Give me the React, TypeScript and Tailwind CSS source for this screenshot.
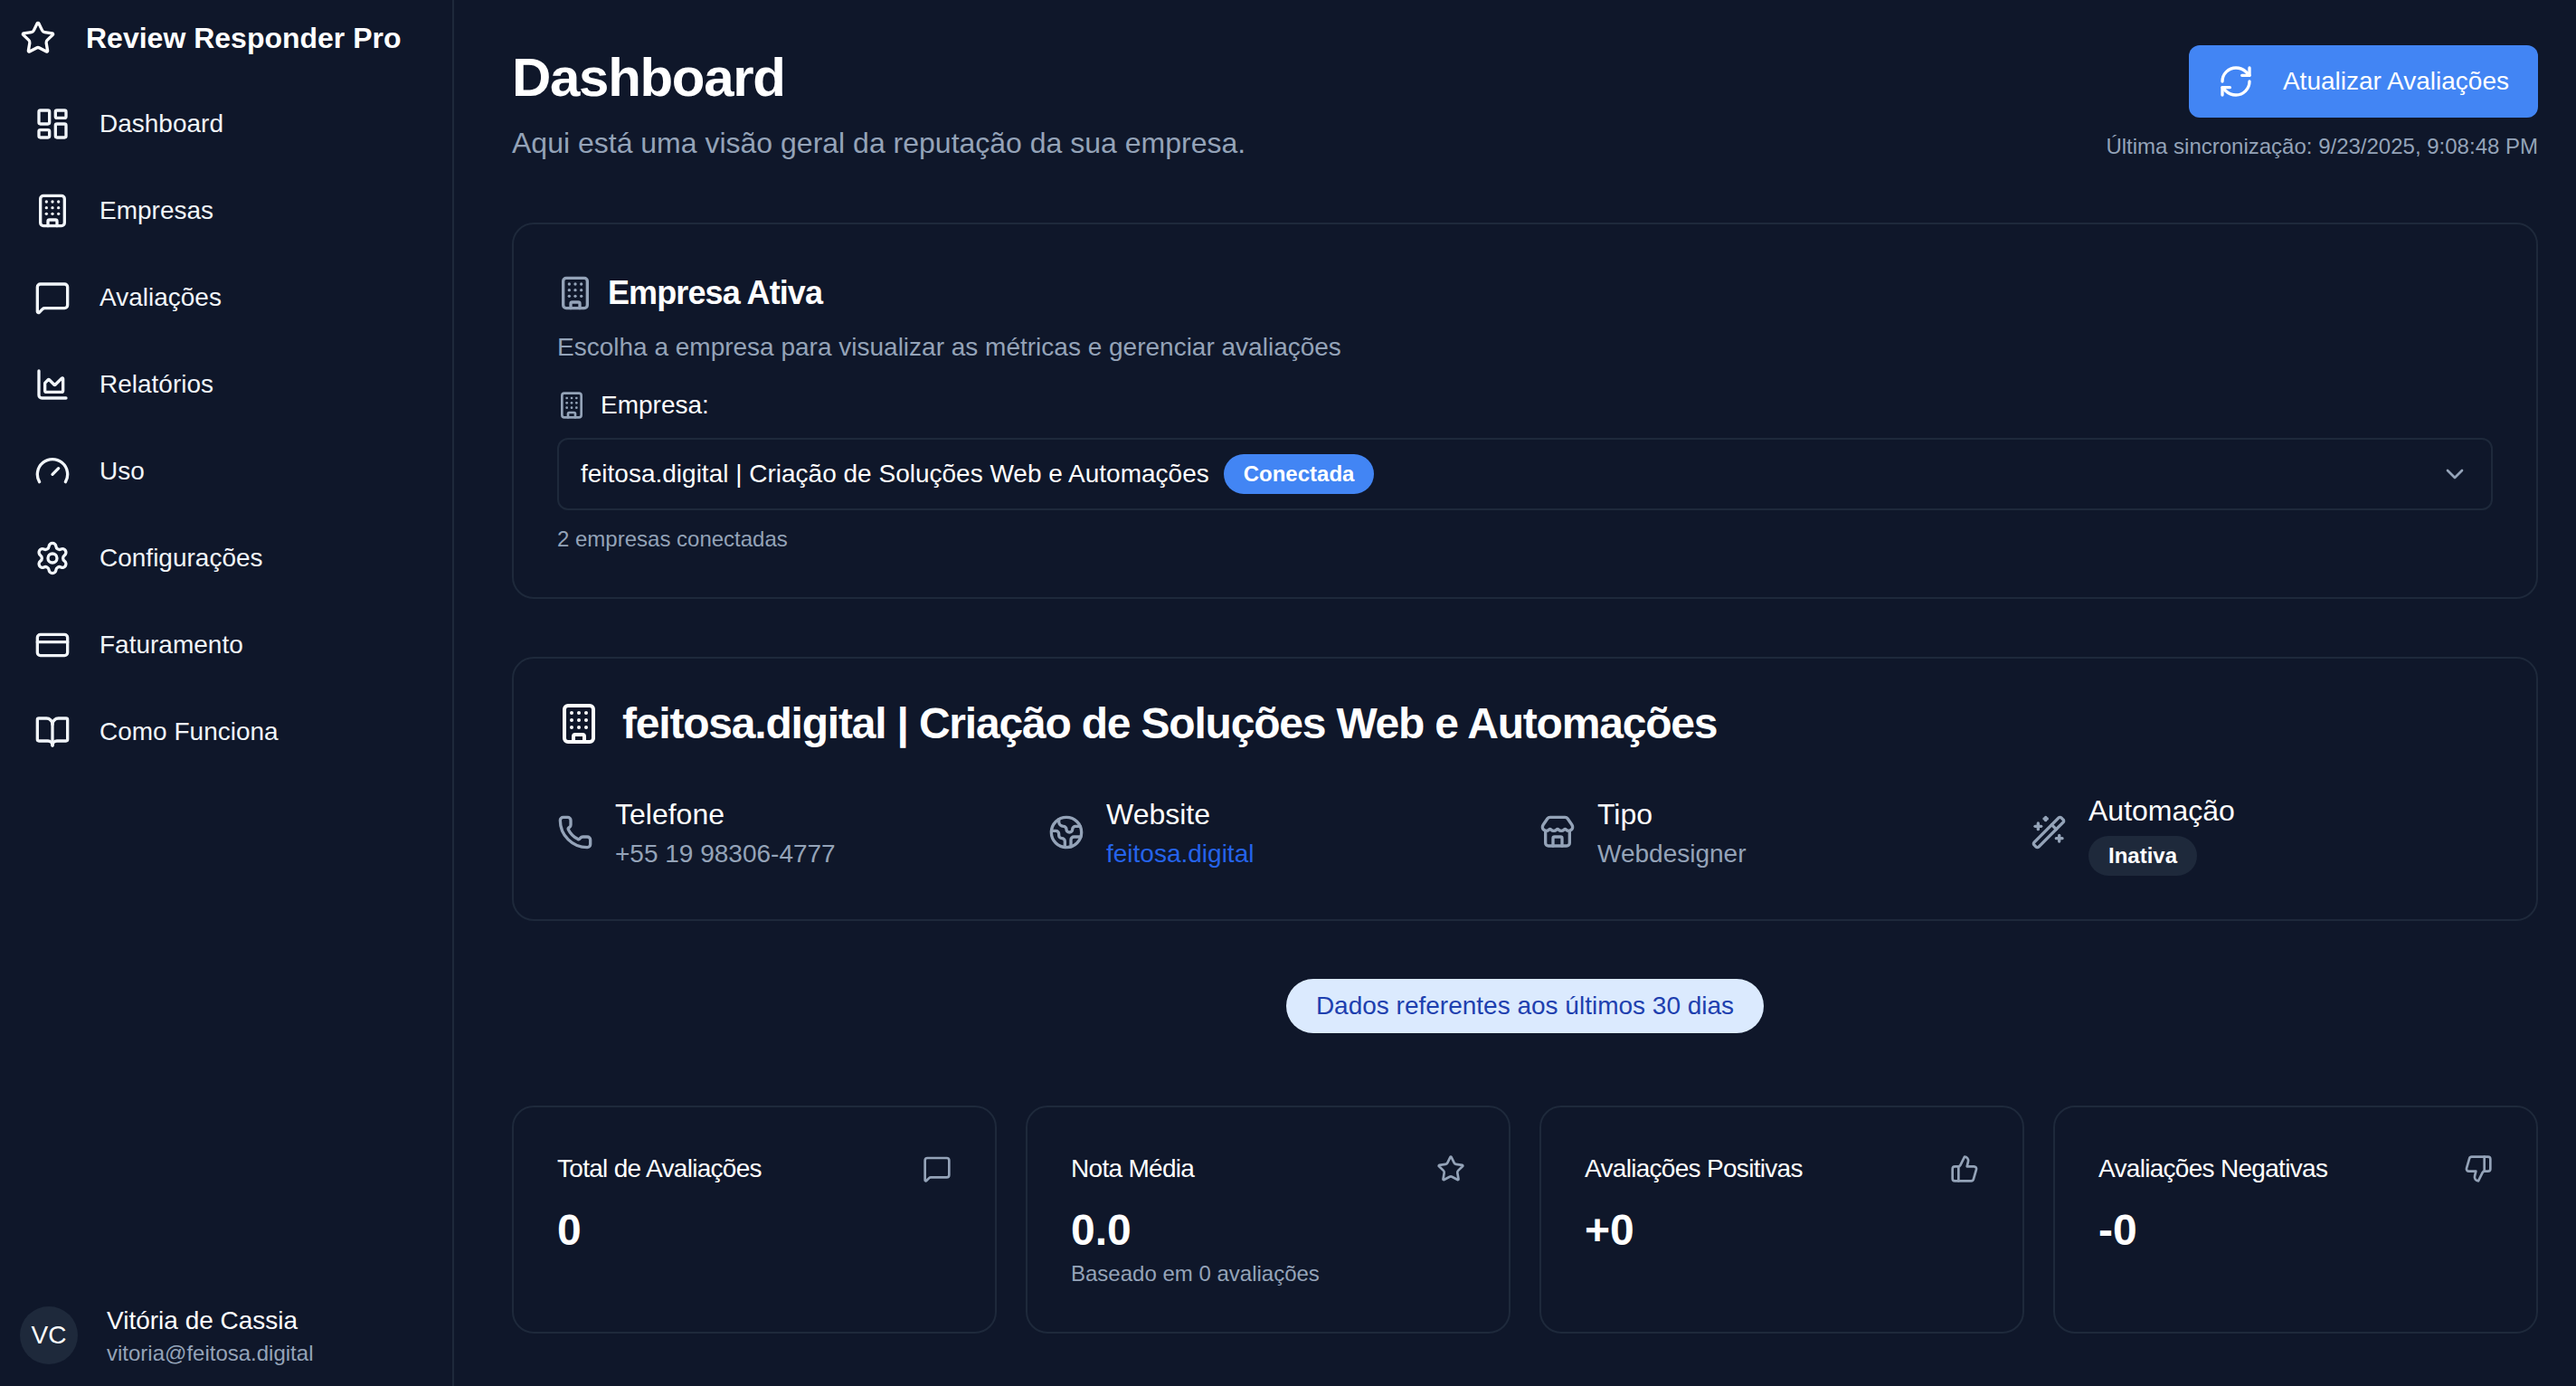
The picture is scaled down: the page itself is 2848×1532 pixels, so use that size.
import React from 'react';
import {
  BookOpen,
  Building,
  ChartArea,
  ChevronDown,
  CreditCard,
  Earth,
  Gauge,
  LayoutDashboard,
  MessageSquare,
  Phone,
  RefreshCw,
  Settings,
  Star,
  Store,
  ThumbsDown,
  ThumbsUp,
  WandSparkles,
} from 'lucide-react';

const navItems = [
  { label: 'Dashboard', icon: LayoutDashboard },
  { label: 'Empresas', icon: Building },
  { label: 'Avaliações', icon: MessageSquare },
  { label: 'Relatórios', icon: ChartArea },
  { label: 'Uso', icon: Gauge },
  { label: 'Configurações', icon: Settings },
  { label: 'Faturamento', icon: CreditCard },
  { label: 'Como Funciona', icon: BookOpen },
];

const Sidebar: React.FC = () => (
  <aside className="flex h-full w-[502px] shrink-0 flex-col border-r-2 border-[#1e293b] px-[22px] pb-5">
    <div className="flex h-[84px] items-center gap-[33px] text-white">
      <Star className="size-10 shrink-0" />
      <span className="text-[32px] leading-10 font-bold">Review Responder Pro</span>
    </div>
    <nav className="mt-[13px] flex flex-col gap-4">
      {navItems.map(({ label, icon: Icon }) => (
        <a key={label} className="flex h-20 items-center gap-8 pl-4 text-[28px] leading-10 text-[#f1f5f9]">
          <Icon className="size-10 shrink-0" />
          <span>{label}</span>
        </a>
      ))}
    </nav>
    <div className="mt-auto flex items-center gap-8">
      <div className="flex size-16 shrink-0 items-center justify-center rounded-full bg-[#1e293b] text-[28px] text-white">VC</div>
      <div className="flex flex-col">
        <span className="text-[28px] leading-10 text-white">Vitória de Cassia</span>
        <span className="text-2xl leading-8 text-[#94a3b8]">vitoria@feitosa.digital</span>
      </div>
    </div>
  </aside>
);

const InfoItem: React.FC<{ icon: React.ElementType; label: string; children: React.ReactNode }> = ({ icon: Icon, label, children }) => (
  <div className="flex items-center gap-6">
    <Icon className="size-10 shrink-0 text-[#94a3b8]" />
    <div className="flex flex-col">
      <span className="text-[32px] leading-12 text-white">{label}</span>
      {children}
    </div>
  </div>
);

const StatCard: React.FC<{ title: string; value: string; note?: string; icon: React.ElementType }> = ({ title, value, note, icon: Icon }) => (
  <div className="rounded-3xl border-2 border-[#1e293b] p-12">
    <div className="flex h-10 items-center justify-between">
      <span className="text-[28px] leading-10 tracking-tight text-white">{title}</span>
      <Icon className="size-8 text-[#94a3b8]" />
    </div>
    <div className="mt-4 text-5xl leading-16 font-bold text-white">{value}</div>
    {note && <div className="text-2xl leading-8 text-[#94a3b8]">{note}</div>}
  </div>
);

export default function App() {
  return (
    <div className="flex h-screen overflow-hidden bg-[#0f172a] font-['Liberation_Sans',Arial,sans-serif]">
      <Sidebar />
      <main className="min-w-0 flex-1 pt-[50px] pr-[42px] pl-16">
        <header className="mb-16 flex items-start justify-between">
          <div>
            <h1 className="text-[60px] leading-[72px] font-bold tracking-[-1.3px] text-white">Dashboard</h1>
            <p className="mt-3 text-[32px] leading-12 text-[#94a3b8]">Aqui está uma visão geral da reputação da sua empresa.</p>
          </div>
          <div className="flex flex-col items-end">
            <button className="flex h-20 items-center gap-8 rounded-xl bg-[#4285f4] px-8 text-[28px] text-white">
              <RefreshCw className="size-10" />
              Atualizar Avaliações
            </button>
            <span className="mt-4 text-2xl leading-8 text-[#94a3b8]">Última sincronização: 9/23/2025, 9:08:48 PM</span>
          </div>
        </header>

        <section className="rounded-3xl border-2 border-[#1e293b] p-12">
          <div className="flex h-14 items-center gap-4">
            <Building className="size-10 text-[#94a3b8]" />
            <h2 className="text-4xl font-bold tracking-tight text-white">Empresa Ativa</h2>
          </div>
          <p className="mt-3 text-[28px] leading-10 text-[#94a3b8]">Escolha a empresa para visualizar as métricas e gerenciar avaliações</p>
          <div className="mt-6 flex items-center gap-4">
            <Building className="size-8 text-[#94a3b8]" />
            <span className="text-[28px] leading-10 text-white">Empresa:</span>
          </div>
          <div className="mt-4 flex h-20 items-center justify-between rounded-xl border-2 border-[#1e293b] px-6">
            <div className="flex items-center gap-4">
              <span className="text-[28px] text-white">feitosa.digital | Criação de Soluções Web e Automações</span>
              <span className="flex h-11 items-center rounded-full bg-[#4285f4] px-[22px] text-2xl font-bold text-white">Conectada</span>
            </div>
            <ChevronDown className="size-8 text-[#94a3b8]" />
          </div>
          <p className="mt-4 text-2xl leading-8 text-[#94a3b8]">2 empresas conectadas</p>
        </section>

        <section className="mt-16 rounded-3xl border-2 border-[#1e293b] p-12 pb-[50px]">
          <div className="flex items-center gap-6">
            <Building className="size-12 text-white" />
            <h2 className="text-5xl leading-12 font-bold tracking-tight text-white">feitosa.digital | Criação de Soluções Web e Automações</h2>
          </div>
          <div className="mt-[50px] grid auto-rows-[92px] grid-cols-4 gap-8">
            <InfoItem icon={Phone} label="Telefone">
              <span className="text-[28px] leading-10 text-[#94a3b8]">+55 19 98306-4777</span>
            </InfoItem>
            <InfoItem icon={Earth} label="Website">
              <a className="text-[28px] leading-10 text-[#2563eb]">feitosa.digital</a>
            </InfoItem>
            <InfoItem icon={Store} label="Tipo">
              <span className="text-[28px] leading-10 text-[#94a3b8]">Webdesigner</span>
            </InfoItem>
            <InfoItem icon={WandSparkles} label="Automação">
              <span className="mt-1 flex h-11 w-fit items-center rounded-full bg-[#1e293b] px-[22px] text-2xl font-bold text-white">Inativa</span>
            </InfoItem>
          </div>
        </section>

        <div className="mt-16 mb-20 flex justify-center">
          <span className="flex h-[60px] items-center rounded-full bg-[#dbeafe] px-[33px] text-[28px] text-[#1e40af]">Dados referentes aos últimos 30 dias</span>
        </div>

        <div className="grid grid-cols-4 gap-8">
          <StatCard title="Total de Avaliações" value="0" icon={MessageSquare} />
          <StatCard title="Nota Média" value="0.0" note="Baseado em 0 avaliações" icon={Star} />
          <StatCard title="Avaliações Positivas" value="+0" icon={ThumbsUp} />
          <StatCard title="Avaliações Negativas" value="-0" icon={ThumbsDown} />
        </div>
      </main>
    </div>
  );
}
